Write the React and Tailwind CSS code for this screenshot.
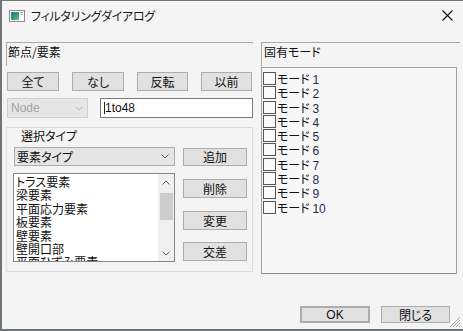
import React from 'react';

const jp = "font-['Noto_Sans_CJK_JP','Noto_Sans',sans-serif] [font-feature-settings:'palt']";

function Btn({ children, className = '' }) {
  return (
    <div
      className={`flex items-center justify-center bg-[#e1e1e1] border border-[#adadad] text-[12px] leading-none text-[#111] ${className}`}
    >
      {children}
    </div>
  );
}

function Chevron({ color = '#555', up = false }) {
  return (
    <svg width="8" height="5" viewBox="0 0 8 5">
      <path
        d={up ? 'M0.5 4.5 L4 1 L7.5 4.5' : 'M0.5 0.5 L4 4 L7.5 0.5'}
        fill="none"
        stroke={color}
        strokeWidth="1"
      />
    </svg>
  );
}

function TitleIcon() {
  return (
    <svg width="16" height="12" viewBox="0 0 16 12">
      <rect x="0.5" y="0.5" width="15" height="11" fill="#ffffff" stroke="#8a8a8a" />
      <defs>
        <linearGradient id="g" x1="0" y1="0" x2="1" y2="1">
          <stop offset="0" stopColor="#2f6f8f" />
          <stop offset="0.5" stopColor="#2f9a7a" />
          <stop offset="1" stopColor="#6cc070" />
        </linearGradient>
      </defs>
      <rect x="2" y="2" width="8" height="8" fill="url(#g)" />
      <rect x="11" y="2" width="3" height="1" fill="#9a9a9a" />
      <rect x="12" y="4" width="2" height="1" fill="#b0b0b0" />
    </svg>
  );
}

export default function App() {
  const elems = ['トラス要素', '梁要素', '平面応力要素', '板要素', '壁要素', '壁開口部', '平面ひずみ要素'];
  const modes = [1, 2, 3, 4, 5, 6, 7, 8, 9, 10];

  return (
    <div className={`relative w-[463px] h-[331px] overflow-hidden bg-[#f4f4f4] border-t border-l-2 border-b-2 border-[#707478] ${jp}`}>
      {/* title bar */}
      <div className="h-[30px] flex items-center pl-[7px]">
        <TitleIcon />
        <span className="ml-[6px] text-[12px] text-[#1a1a1a] tracking-[-0.3px]">フィルタリングダイアログ</span>
        <svg className="ml-auto mr-[10px] mb-[1px]" width="11" height="11" viewBox="0 0 11 11">
          <path d="M0.5 0.5 L10.5 10.5 M10.5 0.5 L0.5 10.5" stroke="#111" strokeWidth="1.1" />
        </svg>
      </div>

      <div className="flex pl-[4px] mt-[11px] gap-[8px]">
        {/* left column */}
        <div className="w-[247px] flex flex-col">
          <div className="h-[24px] border-t border-l border-[#a9a9a9] pl-[1px] pt-[2px] text-[12px] leading-[14px] text-[#111]">
            節点/要素
          </div>
          <div className="flex justify-between mt-[6px] pl-[1px] pr-[1px] h-[19px]">
            <Btn className="w-[52px]">全て</Btn>
            <Btn className="w-[52px]">なし</Btn>
            <Btn className="w-[51px]">反転</Btn>
            <Btn className="w-[51px]">以前</Btn>
          </div>
          <div className="flex mt-[7px] h-[20px] pl-[1px]">
            <div className="w-[81px] flex items-center bg-[#e6e6e6] border border-[#cfcfcf] pl-[3px] pr-[4px]">
              <span className="font-['Liberation_Sans',sans-serif] text-[12px] text-[#a2a2a2]">Node</span>
              <span className="ml-auto flex"><Chevron color="#b8b8b8" /></span>
            </div>
            <div className="ml-[12px] w-[153px] flex items-center bg-white border border-[#7a7a7a] pl-[3px]">
              <span className="w-px h-[12px] bg-[#222]" />
              <span className="font-['Liberation_Sans',sans-serif] text-[12px] text-[#111]">1to48</span>
            </div>
          </div>

          {/* selection type group */}
          <div className="mt-[9px] h-[145px] border border-[#dcdcdc] pl-[6px]">
            <div className="pl-[8px] pt-[1px] text-[12px] leading-[14px] text-[#111]">選択タイプ</div>
            <div className="flex mt-[4px] h-[19px]">
              <div className="w-[161px] ml-[1px] flex items-center bg-[#e5e5e5] border border-[#acacac] pl-[2px] pr-[5px] text-[12px] text-[#111]">
                要素タイプ
                <span className="ml-auto flex"><Chevron /></span>
              </div>
              <Btn className="ml-[8px] w-[64px] h-[18px] mt-[1px]">追加</Btn>
            </div>
            <div className="flex mt-[7px]">
              <div className="w-[162px] h-[89px] flex bg-white border border-[#828790]">
                <div className="flex-1 overflow-hidden pl-[2px] pt-[1px] text-[12px] leading-[13.4px] text-[#111]">
                  {elems.map(e => (
                    <div key={e} className="whitespace-nowrap">{e}</div>
                  ))}
                </div>
                <div className="w-[16px] flex flex-col items-center bg-[#f0f0f0]">
                  <div className="h-[16px] flex items-center"><Chevron color="#606060" up /></div>
                  <div className="w-[13px] h-[27px] bg-[#cdcdcd] mt-[3px]" />
                  <div className="mt-auto h-[16px] flex items-center"><Chevron color="#606060" /></div>
                </div>
              </div>
              <div className="ml-[8px] flex flex-col">
                <Btn className="w-[64px] h-[19px] mt-[6px]">削除</Btn>
                <Btn className="w-[64px] h-[19px] mt-[13px]">変更</Btn>
                <Btn className="w-[64px] h-[19px] mt-[12px]">交差</Btn>
              </div>
            </div>
          </div>
        </div>

        {/* right column */}
        <div className="w-[199px] flex flex-col">
          <div className="h-[24px] border-t border-l border-[#a9a9a9] pl-[2px] pt-[2px] text-[12px] leading-[14px] text-[#111]">
            固有モード
          </div>
          <div className="h-[207px] w-[196px] mt-[1px] border border-[#a0a0a0] border-b-[#8a8a8a] bg-[#f7f7f7] pl-[1px] pt-[4px]">
            {modes.map(m => (
              <div key={m} className="h-[14.3px] flex items-start">
                <span className="w-[13px] h-[13px] border border-[#555] bg-[#fafafa]" />
                <span className="ml-[1px] text-[12px] leading-[13px] text-[#111] whitespace-nowrap">
                  モード <span className="font-['Liberation_Sans',sans-serif] text-[#1f2a55]">{m}</span>
                </span>
              </div>
            ))}
          </div>
          <div className="flex justify-end gap-[11px] pr-[10px] mt-[32px]">
            <Btn className="w-[70px] h-[17px] border-2 border-[#0078d7] font-['Liberation_Sans',sans-serif]">OK</Btn>
            <Btn className="w-[69px] h-[17px]">閉じる</Btn>
          </div>
        </div>
      </div>

      {/* size grip */}
      <svg className="absolute right-[2px] bottom-[1px]" width="11" height="11" viewBox="0 0 11 11">
        <path d="M10 3 L3 10 M10 6 L6 10 M10 9 L9 10 M10 0 L0 10" stroke="#a8a8a8" strokeWidth="1" />
      </svg>
    </div>
  );
}
